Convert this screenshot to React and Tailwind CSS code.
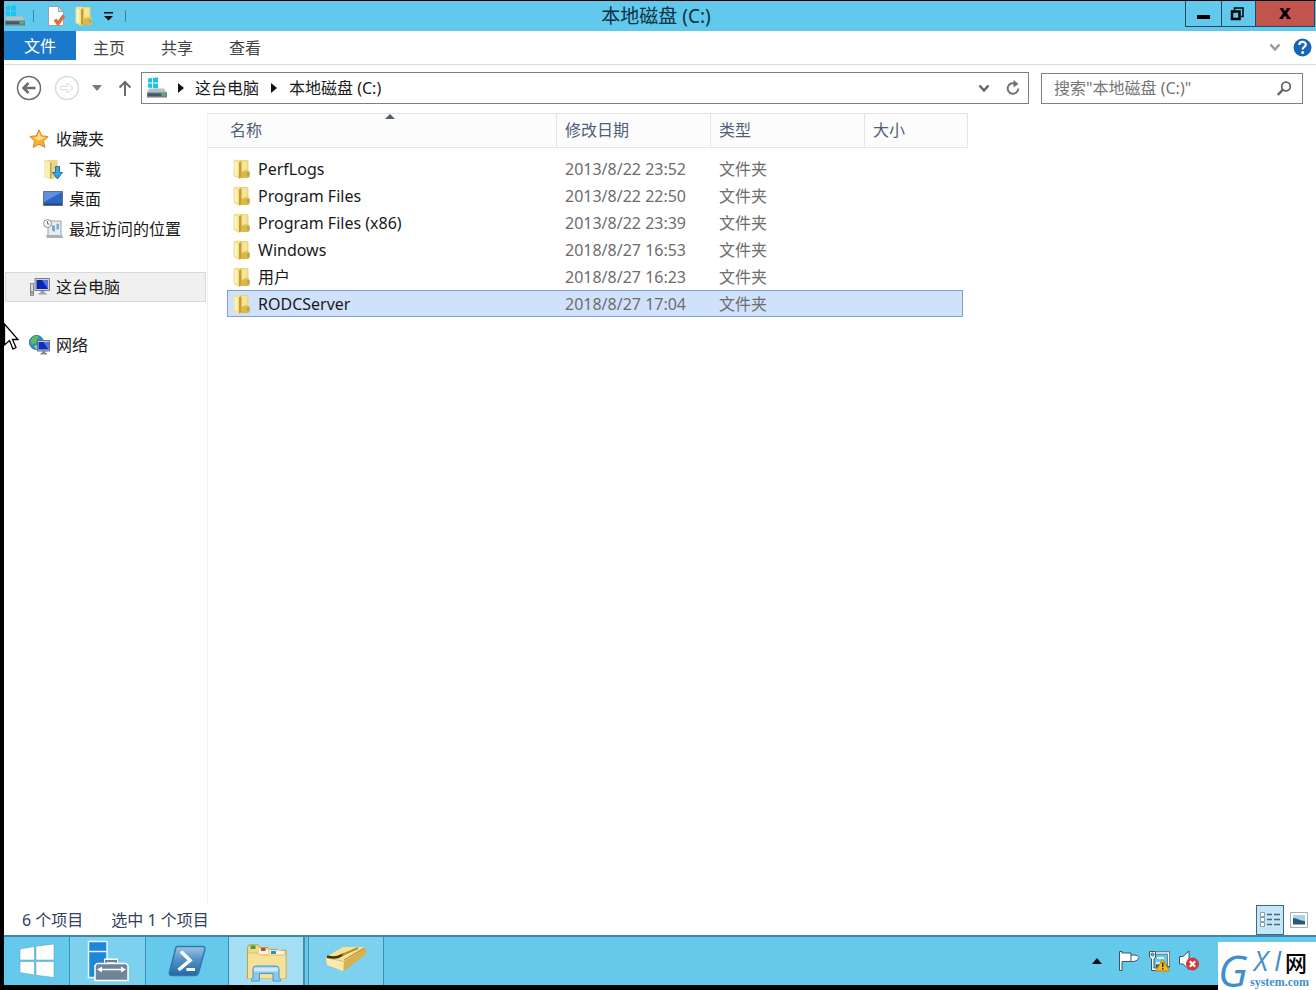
import { useState } from 'react';
import clsx from 'clsx';

const favorites = [
  { label: '下载', Icon: DownloadsIcon },
  { label: '桌面', Icon: DesktopIcon },
  { label: '最近访问的位置', Icon: RecentIcon },
];

const files = [
  { name: 'PerfLogs', modified: '2013/8/22 23:52', type: '文件夹' },
  { name: 'Program Files', modified: '2013/8/22 22:50', type: '文件夹' },
  { name: 'Program Files (x86)', modified: '2013/8/22 23:39', type: '文件夹' },
  { name: 'Windows', modified: '2018/8/27 16:53', type: '文件夹' },
  { name: '用户', modified: '2018/8/27 16:23', type: '文件夹' },
  { name: 'RODCServer', modified: '2018/8/27 17:04', type: '文件夹' },
];

function DriveIcon() {
  return (
    <svg width="22" height="22" viewBox="0 0 22 22" className="shrink-0">
      <path d="M2 1.500l4-.5v4.500H2zM7 .9l5-.6v5.200H7zM2 6.500h4V11l-4-.5zM7 6.500h5v5L7 11z" fill="#19c3ee" />
      <path d="M3 11.500h15l3 4.500H1z" fill="#b9c0c2" />
      <path d="M1 15.500h20v5H1z" fill="#6f7c80" />
      <path d="M2 16.500h13v2.500H2z" fill="#3d5a73" />
      <path d="M16 16.500h3.500v2H16z" fill="#4fc36b" />
    </svg>
  );
}

function FolderIcon() {
  return (
    <svg width="20" height="20" viewBox="0 0 20 20" className="shrink-0">
      <path d="M8 1h7.500l1 1v9l1.500 2v4.500l-1.500 1.500H8z" fill="#ecd478" />
      <path d="M9 2h6v8l-6 3z" fill="#f5e59a" />
      <path d="M1.500 2Q1.500 .8 3 .8h4.500L9 3v16.500l-2 .3L1.500 17z" fill="#f3e08c" />
      <path d="M2.500 2.500l3 1V17l-3-1z" fill="#fbf3c4" />
      <path d="M7 3.500L9.500 2v16L7 19.500z" fill="#c69e2c" />
      <path d="M9.500 13l5-1.500 3 1.500v4.500L16 19H9z" fill="#dcb945" />
      <path d="M15 13.500l2.500-.5v3.500l-2.500.5z" fill="#b3a468" />
    </svg>
  );
}

function PropertiesIcon() {
  return (
    <svg width="20" height="20" viewBox="0 0 20 20">
      <path d="M2.500 .5h10l5 5v14h-15z" fill="#fff" stroke="#9aa3a8" />
      <path d="M12.500 .5v5h5z" fill="#d5dadd" stroke="#9aa3a8" />
      <path d="M9 13.500l3 4L18 9.500" fill="none" stroke="#dd6c45" strokeWidth="3.500" />
    </svg>
  );
}

function StarIcon() {
  return (
    <svg width="20" height="20" viewBox="0 0 20 20" className="shrink-0">
      <path d="M10 .8l2.700 6 6.500.7-4.800 4.400 1.400 6.500L10 15.200l-5.800 3.200 1.400-6.500L.8 7.500l6.500-.7z" fill="#fbb132" stroke="#d9822b" />
      <path d="M10 3l1.800 4.700 4.200.5-6 3.300-5.500-3 4-.6z" fill="#fee08a" />
    </svg>
  );
}

function DownloadsIcon() {
  return (
    <svg width="20" height="21" viewBox="0 0 20 21" className="shrink-0">
      <path d="M1 1.500L6.500 1h8l1 17.500L8 20l-7-1.500z" fill="#ecd685" />
      <path d="M1 1.500l6 1.500v17L1 18.500z" fill="#f8edb8" />
      <path d="M7 3l1.500 1v15.500L7 20z" fill="#c9a43d" />
      <path d="M12.500 7.500h4v6h3l-5 6.500-5-6.500h3z" fill="#37a2dd" stroke="#1d75b3" />
    </svg>
  );
}

function DesktopIcon() {
  return (
    <svg width="20" height="20" viewBox="0 0 20 20" className="shrink-0">
      <path d="M.5 2.500h19v14H.5z" fill="#2c66c4" stroke="#5d6f8b" />
      <path d="M1 3h18L1 13z" fill="#5c8fdd" />
      <path d="M1 14.500h18V16H1z" fill="#26457f" />
    </svg>
  );
}

function RecentIcon() {
  return (
    <svg width="20" height="20" viewBox="0 0 20 20" className="shrink-0">
      <path d="M5 2h13v13l1.500 3.500H4.500L5 15z" fill="#e9edf0" stroke="#98a1a8" />
      <path d="M3.500 16h15v3h-15z" fill="#aab1b6" />
      <path d="M9 6l3 1v6l-3-1.500zM13.500 5l2.500-.5v5.500l-2.500 1z" fill="#77a9d6" />
      <circle cx="4.500" cy="4.500" r="4" fill="#f4f6f7" stroke="#8c959b" />
      <path d="M4.500 2v3h2" fill="none" stroke="#6b7479" />
    </svg>
  );
}

function ComputerIcon() {
  return (
    <svg width="20" height="20" viewBox="0 0 20 20" className="shrink-0">
      <path d="M.5 6.500h3v12h-3z" fill="#d5dadd" stroke="#7d868c" />
      <path d="M1.500 14h1v3h-1z" fill="#555f66" />
      <path d="M5 1.500h14.500v12H5z" fill="#c9d0d8" stroke="#76808c" />
      <path d="M6.500 3H18v9H6.500z" fill="#0c24ae" />
      <path d="M12 3h6v9z" fill="#4d77e6" />
      <path d="M10.500 14h4v2h2v1.500h-8V16h2z" fill="#98a1aa" />
    </svg>
  );
}

function NetworkIcon() {
  return (
    <svg width="21" height="20" viewBox="0 0 21 20" className="shrink-0">
      <circle cx="7.500" cy="7.500" r="7" fill="#3a86c9" stroke="#2a6a9c" />
      <path d="M3 3c3-3 6-2 7-1L8 4.500 7 8 3.500 9.500 1 7z" fill="#58bd63" />
      <path d="M5 11l3-1 1 3.500-2 .8z" fill="#8fdb8a" />
      <path d="M8.500 5.500h12v10.500h-12z" fill="#bcc9d9" stroke="#5f7186" />
      <path d="M9.500 7h10v7.500h-10z" fill="#1130bd" />
      <path d="M14.500 7h5v7.500z" fill="#4d7be8" />
      <path d="M13 16h3.500v2H18v1.500h-6.500V18H13z" fill="#7e8b99" />
    </svg>
  );
}

function SmallTriangle({ className }) {
  return (
    <svg width="6" height="10" viewBox="0 0 6 10" className={clsx('shrink-0', className)}>
      <path d="M0 0l6 5-6 5z" fill="#111" />
    </svg>
  );
}

function ChevronDown({ color }) {
  return (
    <svg width="12" height="9" viewBox="0 0 12 9">
      <path d="M1.500 1.500L6 6.500l4.500-5" fill="none" stroke={color} strokeWidth="2.500" />
    </svg>
  );
}

function TitleBar() {
  return (
    <header className="flex h-[30px] bg-[#62c9ec] pr-px">
      <div className="flex w-[123px] items-center">
        <div className="w-[22px] overflow-hidden">
          <DriveIcon />
        </div>
        <span className="ml-[7px] h-3 w-px bg-[#4d7d90]"></span>
        <button aria-label="属性" className="ml-3">
          <PropertiesIcon />
        </button>
        <button aria-label="新建文件夹" className="ml-2">
          <FolderIcon />
        </button>
        <button aria-label="自定义快速访问工具栏" className="ml-[10px]">
          <svg width="9" height="9" viewBox="0 0 9 9">
            <path d="M0 0h9v1.500H0zM0 4h9L4.500 8.500z" fill="#111" />
          </svg>
        </button>
        <span className="ml-3 h-3 w-px bg-[#4d7d90]"></span>
      </div>
      <h1 className="flex-1 text-center text-[19px] leading-[30px] text-[#0c3040]">本地磁盘 (C:)</h1>
      <div className="flex h-[26px] border border-t-0 border-[#1f4a63]">
        <button aria-label="最小化" className="flex w-[35px] items-center justify-center">
          <svg width="13" height="14" viewBox="0 0 13 14">
            <path d="M0 8h13v4H0z" fill="#000" />
          </svg>
        </button>
        <button aria-label="还原" className="flex w-[34px] items-center justify-center border-l border-[#1f4a63] pr-1">
          <svg width="14" height="14" viewBox="0 0 14 14" fill="none" stroke="#000">
            <path d="M4.500 3V1h8.500v8.500h-2" strokeWidth="1.500" />
            <path d="M2 4.500h7.500V12H2z" strokeWidth="2.500" />
          </svg>
        </button>
        <button aria-label="关闭" className="flex w-[59px] items-center justify-center border-l border-[#1f4a63] bg-[#c1544c]">
          <svg width="12" height="11" viewBox="0 0 12 11">
            <path d="M.5 0h3.500l2 3.200L8 0h3.500L8 5.300l4 5.700H8.300L6 7.500 3.700 11H0l4-5.700z" fill="#000" />
          </svg>
        </button>
      </div>
    </header>
  );
}

function RibbonTabs() {
  return (
    <nav className="flex h-[34px] border-b border-[#d9dbdc] text-base text-[#444]">
      <button className="h-[29px] w-[72px] bg-[#1a79ca] text-white">文件</button>
      <button className="w-[66px]">主页</button>
      <button className="w-[70px]">共享</button>
      <button className="w-[66px]">查看</button>
      <div className="ml-auto flex items-center gap-3 pr-1">
        <button aria-label="展开功能区">
          <ChevronDown color="#999" />
        </button>
        <button aria-label="帮助">
          <svg width="19" height="19" viewBox="0 0 19 19">
            <circle cx="9.500" cy="9.500" r="9" fill="#1565b8" />
            <path d="M6.300 7c0-4 6.500-4 6.500-.4 0 2.400-3.100 2.300-3.100 4.900" fill="none" stroke="#fff" strokeWidth="2.200" />
            <circle cx="9.600" cy="14.500" r="1.500" fill="#fff" />
          </svg>
        </button>
      </div>
    </nav>
  );
}

function AddressBar() {
  const [query, setQuery] = useState('');

  return (
    <div className="flex h-[46px] items-center pr-[13px] pl-3">
      <button aria-label="后退">
        <svg width="26" height="26" viewBox="0 0 26 26" fill="none" stroke="#6b6b6b">
          <circle cx="13" cy="13" r="11.500" strokeWidth="1.500" />
          <path d="M19.500 13H8M12.500 8l-5 5 5 5" strokeWidth="2.500" />
        </svg>
      </button>
      <button aria-label="前进" className="ml-3" disabled>
        <svg width="26" height="26" viewBox="0 0 26 26" fill="none" stroke="#dcdcdc">
          <circle cx="13" cy="13" r="11.500" strokeWidth="1.500" />
          <path d="M6.500 11.500H13V8l6 5-6 5v-3.500H6.500z" />
        </svg>
      </button>
      <button aria-label="最近浏览的位置" className="ml-3">
        <svg width="10" height="6" viewBox="0 0 10 6">
          <path d="M0 0h10L5 6z" fill="#7a7a7a" />
        </svg>
      </button>
      <button aria-label="上移" className="ml-4">
        <svg width="14" height="16" viewBox="0 0 14 16" fill="none" stroke="#6b6b6b" strokeWidth="2">
          <path d="M7 16V2M1.500 7.500L7 2l5.500 5.500" />
        </svg>
      </button>

      <div className="ml-[9px] flex h-8 flex-1 items-center border border-[#7f7f7f] pr-2 pl-1 text-base text-[#1a1a1a]">
        <DriveIcon />
        <SmallTriangle className="ml-[10px]" />
        <button className="ml-[11px]">这台电脑</button>
        <SmallTriangle className="ml-3" />
        <button className="ml-3">本地磁盘 (C:)</button>
        <button aria-label="以前的位置" className="ml-auto">
          <ChevronDown color="#666" />
        </button>
        <button aria-label="刷新" className="ml-4">
          <svg width="14" height="16" viewBox="0 0 14 16">
            <path d="M9.500 3.800A5.300 5.300 0 1 0 12.300 8.500" fill="none" stroke="#737373" strokeWidth="2" />
            <path d="M7.500 0v7.500L12.500 4z" fill="#737373" />
          </svg>
        </button>
      </div>

      <label className="ml-3 flex h-[31px] w-[262px] items-center border border-[#7f7f7f] pr-[10px] pl-3">
        <input
          type="text"
          aria-label="搜索"
          value={query}
          onChange={e => setQuery(e.target.value)}
          placeholder={'搜索"本地磁盘 (C:)"'}
          className="min-w-0 flex-1 text-base outline-none placeholder:text-[#767676]"
        />
        <svg width="15" height="15" viewBox="0 0 15 15" fill="none" stroke="#666">
          <circle cx="9" cy="5.500" r="4.300" strokeWidth="1.800" />
          <path d="M6 8.500L.8 14" strokeWidth="2.500" />
        </svg>
      </label>
    </div>
  );
}

function Sidebar() {
  return (
    <aside className="w-[204px] shrink-0 border-r border-[#f3f3f3] pt-[11px] text-base text-[#1a1a1a]">
      <a href="#favorites" className="flex h-[30px] items-center gap-[7px] pl-[25px]">
        <StarIcon />
        收藏夹
      </a>
      {favorites.map(({ label, Icon }) => (
        <a key={label} href="#favorites" className="flex h-[30px] items-center gap-[6px] pl-[39px]">
          <Icon />
          {label}
        </a>
      ))}
      <a
        href="#computer"
        className="mt-7 mr-px ml-px flex h-[30px] items-center gap-[6px] border border-[#d9d9d9] bg-[#f0f0f0] pl-6"
      >
        <ComputerIcon />
        这台电脑
      </a>
      <a href="#network" className="mt-7 flex h-[30px] items-center gap-[6px] pl-[25px]">
        <NetworkIcon />
        网络
      </a>
    </aside>
  );
}

function FileList() {
  const [selected, setSelected] = useState('RODCServer');

  return (
    <main className="min-w-0 flex-1">
      <table className="block w-[760px] text-left text-base">
        <thead className="block">
          <tr className="flex h-[35px] items-stretch border-y border-[#e5e5e5] bg-[#fcfcfc] leading-[33px] text-[#4c607a]">
            <th className="relative w-[349px] border-r border-[#e5e5e5] pl-[22px] font-normal">
              名称
              <svg width="10" height="5" viewBox="0 0 10 5" className="absolute top-0 left-[177px]">
                <path d="M5 0l5 5H0z" fill="#4c607a" />
              </svg>
            </th>
            <th className="w-[154px] border-r border-[#e5e5e5] pl-2 font-normal">修改日期</th>
            <th className="w-[154px] border-r border-[#e5e5e5] pl-2 font-normal">类型</th>
            <th className="flex-1 border-r border-[#e5e5e5] pl-2 font-normal">大小</th>
          </tr>
        </thead>
        <tbody className="block pt-[7px] pr-[5px] pl-[19px]">
          {files.map(file => (
            <tr
              key={file.name}
              onClick={() => setSelected(file.name)}
              className={clsx(
                'flex h-[27px] items-center border',
                file.name === selected ? 'border-[#7da2ce] bg-[#d0e2fb]' : 'border-transparent'
              )}
            >
              <td className="flex w-[329px] items-center gap-[6px] pl-1 text-[#1a1a1a]">
                <FolderIcon />
                {file.name}
              </td>
              <td className="w-[154px] pl-2 text-[#6d6d6d]">{file.modified}</td>
              <td className="w-[154px] pl-2 text-[#6d6d6d]">{file.type}</td>
              <td className="flex-1"></td>
            </tr>
          ))}
        </tbody>
      </table>
    </main>
  );
}

function StatusBar() {
  return (
    <footer className="flex h-[30px] items-center pl-[18px] text-base text-[#33415f]">
      <span>6 个项目</span>
      <span className="ml-7">选中 1 个项目</span>
      <div className="ml-auto flex items-center pr-2">
        <button aria-label="详细信息" className="flex h-[30px] w-7 items-center justify-center border border-[#3f6a84] bg-[#c5e6f8]">
          <svg width="20" height="16" viewBox="0 0 20 16">
            <path d="M.5 .5h4v4h-4zM.5 5.500h4v4h-4zM.5 10.500h4v4h-4z" fill="#fff" stroke="#8c9aa3" />
            <path d="M7 2.500h5M14 2.500h6M7 7.500h5M14 7.500h6M7 12.500h5M14 12.500h6" stroke="#4b6578" strokeWidth="1.500" />
          </svg>
        </button>
        <button aria-label="大图标" className="ml-[6px]">
          <svg width="18" height="16" viewBox="0 0 18 16">
            <path d="M.5 .5h17v15H.5z" fill="#fff" stroke="#a7afb5" />
            <path d="M3 3h12v9H3z" fill="#a9d4ec" />
            <path d="M3 6c4 0 7 3 12 3v3.500H3z" fill="#2c5a70" />
          </svg>
        </button>
      </div>
    </footer>
  );
}

function StartIcon() {
  return (
    <svg width="36" height="34" viewBox="0 0 36 34">
      <path d="M1 5l14.500-2.500V16H1zM17 2.200L35 0v16H17zM1 17.500h14.500V31L1 28.500zM17 17.500h18V33.500L17 31.200z" fill="#fff" stroke="#4b9fbd" strokeWidth=".5" />
    </svg>
  );
}

function ServerManagerIcon() {
  return (
    <svg width="42" height="42" viewBox="0 0 42 42">
      <path d="M1.500 1.500h18.500v36h-18.500z" fill="#1d86d8" stroke="#e8f6fc" strokeWidth="1.500" />
      <path d="M2 11.500h18" stroke="#e8f6fc" strokeWidth="1.500" />
      <path d="M19 24v-3.500h10V24" fill="none" stroke="#fff" strokeWidth="4" />
      <path d="M19 25v-4h10v4" fill="none" stroke="#6f7f8d" strokeWidth="2" />
      <path d="M10 23.500h29l2 2v15H8v-15z" fill="#6f8496" stroke="#fff" strokeWidth="1.500" />
      <path d="M12 29.500h25" stroke="#fff" strokeWidth="1.500" />
      <path d="M10 29.500l5-3v6zM39 29.500l-5-3v6z" fill="#fff" />
    </svg>
  );
}

function PowerShellIcon() {
  return (
    <svg width="38" height="32" viewBox="0 0 38 32">
      <defs>
        <linearGradient id="ps" x1="0" y1="0" x2="0" y2="1">
          <stop offset="0" stopColor="#9cc4e2" />
          <stop offset=".45" stopColor="#5292c9" />
          <stop offset="1" stopColor="#2467a6" />
        </linearGradient>
      </defs>
      <path d="M9.500 1.500h25q3 0 2.300 3l-6 22.500q-1 3.500-4 3.500H4q-3.500 0-2.500-3.500L7.500 4q.5-2.500 2-2.500z" fill="url(#ps)" stroke="#2f79ae" strokeWidth="1.500" />
      <path d="M13 6.500l9 9L10.500 25" fill="none" stroke="#fff" strokeWidth="3.500" />
      <path d="M18.500 24.500H27" stroke="#fff" strokeWidth="3" />
    </svg>
  );
}

function ExplorerIcon() {
  return (
    <svg width="42" height="38" viewBox="0 0 42 38">
      <path d="M2.500 3.500L4 .8h9l2 2.700h8L25 5.500h7l2 1.500 7-1v28.500H2.500z" fill="#f1d88a" stroke="#c59d42" />
      <path d="M14 4.500l9 1.500v4h-9zM25 6l14 1v5H25z" fill="#fbf7e4" />
      <path d="M5.500 1.500h5v3.500h-5z" fill="#35a936" />
      <path d="M16 4h4.500v3H16z" fill="#bd4a2c" />
      <path d="M26 7h5v3h-5z" fill="#2d8bd0" />
      <path d="M3 9h10l2 2h25.500v23.500H3z" fill="#f6e199" />
      <path d="M3 9h10l2 2h25.500" fill="none" stroke="#dfbd66" />
      <path d="M6.500 37v-2l1.500-1V25q0-3 3-3h20q3 0 3 3v9l1.500 1v2H28V29.500H14.500V37z" fill="#8cc7ec" stroke="#4a98c7" />
      <path d="M9 23.500h24v4H9z" fill="#cdeafa" />
    </svg>
  );
}

function RunBoxIcon() {
  return (
    <svg width="44" height="26" viewBox="0 0 44 26">
      <path d="M2 12L22 2l19-1 1 7-22 17-17-6z" fill="#dfb95a" />
      <path d="M2 12l18 4-1 9-16-6z" fill="#fbeab0" />
      <path d="M20 16L42 2v6L20 25z" fill="#d8b052" />
      <path d="M2 11L19 1h22L20 15z" fill="#fae294" />
      <path d="M3 10.500q9 2.500 14-1L20 8" fill="none" stroke="#3d3409" strokeWidth="2.500" />
      <path d="M18 9L34 2" stroke="#b08f33" strokeWidth="2" />
      <path d="M20 14L40 2" stroke="#a9862f" />
    </svg>
  );
}

function Taskbar() {
  return (
    <footer className="flex h-[50px] border-t-2 border-[#3c88a6] bg-[#64c9eb]">
      <button aria-label="开始" className="flex w-[66px] items-center justify-center border-r border-[#3f8fae]">
        <StartIcon />
      </button>
      <button aria-label="服务器管理器" className="flex w-[76px] items-center justify-center border-r border-[#3f8fae] bg-[#7cd1ee]">
        <ServerManagerIcon />
      </button>
      <button aria-label="Windows PowerShell" className="flex w-[83px] items-center justify-center border-r border-[#3f8fae]">
        <PowerShellIcon />
      </button>
      <button aria-label="文件资源管理器" className="flex w-[76px] items-center justify-center border-r-2 border-[#3f8fae] bg-[#a3def3] pt-1">
        <ExplorerIcon />
      </button>
      <button aria-label="运行" className="ml-[3px] flex w-[76px] items-center justify-center border-x border-[#3f8fae] bg-[#7cd1ee] pb-1">
        <RunBoxIcon />
      </button>

      <div className="ml-auto flex items-center pr-[116px]">
        <button aria-label="显示隐藏的图标">
          <svg width="10" height="6" viewBox="0 0 10 6">
            <path d="M5 0l5 6H0z" fill="#111" />
          </svg>
        </button>
        <button aria-label="操作中心" className="ml-4">
          <svg width="22" height="22" viewBox="0 0 22 22">
            <path d="M11 5h5q4 0 5 2.500-1 3.500-5 4h-5z" fill="#fff" stroke="#35596b" />
            <path d="M1.500 1.500H4V3h9v8.500H4v9H1.500z" fill="#fff" stroke="#35596b" />
          </svg>
        </button>
        <button aria-label="网络" className="ml-2">
          <svg width="22" height="22" viewBox="0 0 22 22">
            <path d="M8 3h12.500v13H8" fill="none" stroke="#35596b" strokeWidth="3" />
            <path d="M8 3h12.500v13M9 8h6v5H8" fill="none" stroke="#fff" strokeWidth="1.500" />
            <path d="M1.500 1.500h6V7L6 9v9h4v2.500H3.500V9l-2-2z" fill="#fff" stroke="#35596b" />
            <circle cx="4.500" cy="4.500" r="1.500" fill="#64c9eb" stroke="#35596b" />
            <path d="M14.500 9l7 12H8z" fill="#f9b916" stroke="#c98309" />
            <path d="M14 12.500h1.500v4.500H14zM14 18h1.500v1.500H14z" fill="#3a2a00" />
          </svg>
        </button>
        <button aria-label="音量" className="ml-2">
          <svg width="22" height="22" viewBox="0 0 22 22">
            <path d="M1.500 6.500H5l6-5.500v18.500L5 14H1.500z" fill="#fff" stroke="#35596b" />
            <circle cx="14.500" cy="14" r="6.500" fill="#d8343a" />
            <path d="M11.800 11.300l5.400 5.400M17.200 11.300l-5.400 5.400" stroke="#fff" strokeWidth="2.200" />
          </svg>
        </button>
      </div>
    </footer>
  );
}

function SiteBadge() {
  return (
    <svg width="98" height="48" viewBox="0 0 98 48" className="absolute right-0 bottom-0 bg-white">
      <g fill="#3f8fca" fontStyle="italic" fontFamily="'Open Sans', sans-serif" fontWeight="500">
        <text x="0" y="45" fontSize="44">G</text>
        <text x="36" y="29" fontSize="27">X</text>
        <text x="56" y="29" fontSize="27">I</text>
      </g>
      <text x="67" y="29" fontSize="22" fontWeight="500" fill="#000" fontFamily="'Noto Sans CJK SC', sans-serif">网</text>
      <text x="32" y="44" fontSize="12" fontWeight="700" fill="#3f8fca" fontFamily="'Liberation Serif', serif">system.com</text>
    </svg>
  );
}

function Cursor() {
  return (
    <svg width="16" height="28" viewBox="0 0 16 28" className="absolute top-[323px] left-1">
      <path d="M.5 1v21l5-4.500 3.500 8.500 3-1.500L8.500 16.500H14z" fill="#fff" stroke="#000" strokeWidth="1.300" />
    </svg>
  );
}

export default function App() {
  return (
    <div className="relative flex min-h-screen flex-col bg-black pt-px pb-[5px] pl-1 font-['Noto_Sans','Noto_Sans_CJK_SC',sans-serif]">
      <div className="flex flex-1 flex-col bg-white">
        <TitleBar />
        <RibbonTabs />
        <AddressBar />
        <div className="flex flex-1 pt-[2px]">
          <Sidebar />
          <FileList />
        </div>
        <StatusBar />
        <Taskbar />
      </div>
      <Cursor />
      <SiteBadge />
    </div>
  );
}
